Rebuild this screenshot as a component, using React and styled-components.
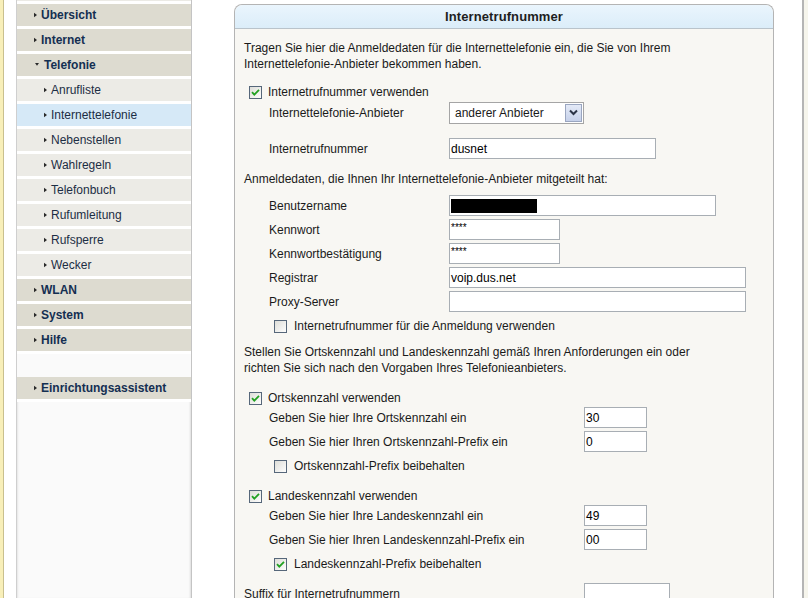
import React from "react";
import styled, { createGlobalStyle } from "styled-components";

const Global = createGlobalStyle`
  html, body { margin: 0; padding: 0; background: #ffffff; }
  body { font-family: "Liberation Sans", Arial, sans-serif; font-size: 12px; color: #1a1a1a; }
  #root { height: 100vh; overflow: hidden; }
`;

const Page = styled.div`
  display: flex;
  height: 598px;
  overflow: hidden;
  background: #fff;
`;

const EdgeLeft = styled.div`
  width: 3px;
  flex: none;
  background: #f8efb9;
  border-right: 1px solid #c9c08e;
`;

const Gutter = styled.div`
  width: ${(p) => p.$w}px;
  flex: none;
  background: #fff;
`;

const Sidebar = styled.nav`
  width: 174px;
  flex: none;
  background: #fafafa;
  border-left: 1px solid #cfcfcf;
  border-right: 1px solid #c4c4c4;
  box-shadow: inset 2px 0 2px -1px #e6e6e6, inset -2px 0 2px -1px #dedede;
  display: flex;
  flex-direction: column;
  & > * { flex: none; }
`;

const Stub = styled.div`
  height: 1px;
  background: #ebeae5;
  border-bottom: 3px solid #fff;
`;

const NavItem = styled.div`
  height: 22px;
  border-bottom: 3px solid #fff;
  display: flex;
  align-items: center;
  gap: 4px;
  padding-left: ${(p) => (p.$sub ? 27 : 17)}px;
  background: ${(p) => (p.$active ? "#d6e9f7" : p.$sub ? "#ecebe6" : "#dddbd0")};
  color: ${(p) => (p.$sub ? "#1c2d44" : "#142f52")};
  font-weight: ${(p) => (p.$sub ? "normal" : "bold")};
  font-size: 12px;
  white-space: nowrap;
`;

const NavSpacer = styled.div`
  height: 23px;
  background: #fafafa;
`;

const Arrow = styled.svg`
  flex: none;
  width: 5px;
  height: 6px;
`;

const Panel = styled.section`
  width: 538px;
  flex: none;
  margin-top: 4px;
  border: 1px solid #b4b4b4;
  border-bottom: none;
  border-radius: 8px 8px 0 0;
  background: #f8f7f3;
  display: flex;
  flex-direction: column;
  & > * { flex: none; }
`;

const PanelHead = styled.div`
  height: 23px;
  border-radius: 8px 8px 0 0;
  background: linear-gradient(#eaf5fd, #dbedf9);
  border-bottom: 1px solid #b9c3cb;
  display: flex;
  align-items: center;
  justify-content: center;
  font-weight: bold;
  font-size: 13px;
  color: #1e1e1e;
  letter-spacing: 0.1px;
`;

const PanelBody = styled.div`
  padding: 11px 9px 0 9px;
  display: flex;
  flex-direction: column;
  & > * { flex: none; }
`;

const Para = styled.p`
  margin: ${(p) => p.$mt || 0}px 0 0 0;
  line-height: 16px;
  font-size: 12px;
`;

const CheckRow = styled.label`
  display: flex;
  align-items: center;
  height: 16px;
  margin-top: ${(p) => p.$mt || 0}px;
  padding-left: ${(p) => (p.$sub ? 30 : 5)}px;
  gap: ${(p) => (p.$sub ? 7 : 6)}px;
  line-height: 16px;
`;

const FieldRow = styled.div`
  display: flex;
  align-items: center;
  height: 21px;
  margin-top: ${(p) => p.$mt || 0}px;
  padding-left: ${(p) => (p.$flush ? 0 : 25)}px;
`;

const Label = styled.span`
  width: ${(p) => p.$w || 180}px;
  flex: none;
`;

const TextBox = styled.div`
  width: ${(p) => p.$w}px;
  height: 21px;
  flex: none;
  box-sizing: border-box;
  border: 1px solid #a8aeb4;
  background: #fff;
  display: flex;
  align-items: ${(p) => (p.$top ? "flex-start" : "center")};
  padding: ${(p) => (p.$top ? "3px 1px 0" : "0 1px")};
  font-size: ${(p) => (p.$top ? "10px" : "12px")};
  line-height: ${(p) => (p.$top ? "10px" : "16px")};
  color: #000;
`;

const Redact = styled.div`
  width: 86px;
  height: 14px;
  background: #000;
`;

const SelectBox = styled.div`
  width: 135px;
  height: 22px;
  flex: none;
  box-sizing: border-box;
  border: 1px solid #a5a5a5;
  background: #fff;
  display: flex;
  align-items: center;
  padding: 0 1px 0 5px;
  font-size: 12px;
`;

const SelectText = styled.span`
  flex: 1;
  white-space: nowrap;
`;

const SelectButton = styled.span`
  width: 17px;
  height: 18px;
  box-sizing: border-box;
  border: 1px solid #9aa6c0;
  background: linear-gradient(#e4eaf7, #c6d1ea);
  display: flex;
  align-items: center;
  justify-content: center;
`;

const EdgeRight = styled.div`
  width: 6px;
  flex: none;
  border-left: 2px solid #b5b5b5;
  background: #f6f5ec;
`;

function Tri({ down }) {
  return down ? (
    <Arrow viewBox="0 0 6 6" style={{ width: 6, height: 4 }}>
      <path d="M0 0 L6 0 L3 4 Z" fill="#2a2a2a" />
    </Arrow>
  ) : (
    <Arrow viewBox="0 0 4 6" style={{ width: 3 }}>
      <path d="M0 0 L4 3 L0 6 Z" fill="#2a2a2a" />
    </Arrow>
  );
}

function Check({ on }) {
  return (
    <svg width="13" height="13" viewBox="0 0 13 13" style={{ flex: "none" }}>
      <defs>
        <linearGradient id="cbg" x1="0" y1="0" x2="1" y2="1">
          <stop offset="0" stopColor="#dcdcd6" />
          <stop offset="1" stopColor="#ffffff" />
        </linearGradient>
      </defs>
      <rect x="0.5" y="0.5" width="12" height="12" fill="url(#cbg)" stroke="#56677a" />
      {on && (
        <path
          d="M3 6.2 L5.3 8.6 L10 3.9"
          fill="none"
          stroke="#21a121"
          strokeWidth="1.8"
        />
      )}
    </svg>
  );
}

const nav = [
  { t: "Übersicht" },
  { t: "Internet" },
  { t: "Telefonie", open: true },
  { t: "Anrufliste", sub: true },
  { t: "Internettelefonie", sub: true, active: true },
  { t: "Nebenstellen", sub: true },
  { t: "Wahlregeln", sub: true },
  { t: "Telefonbuch", sub: true },
  { t: "Rufumleitung", sub: true },
  { t: "Rufsperre", sub: true },
  { t: "Wecker", sub: true },
  { t: "WLAN" },
  { t: "System" },
  { t: "Hilfe" },
];

export default function App() {
  return (
    <>
      <Global />
      <Page>
        <EdgeLeft />
        <Gutter $w={12} />
        <Sidebar>
          <Stub />
          {nav.map((n) => (
            <NavItem key={n.t} $sub={n.sub} $active={n.active}>
              <Tri down={n.open} />
              {n.t}
            </NavItem>
          ))}
          <NavSpacer />
          <NavItem>
            <Tri />
            Einrichtungsassistent
          </NavItem>
        </Sidebar>
        <Gutter $w={42} />
        <Panel>
          <PanelHead>Internetrufnummer</PanelHead>
          <PanelBody>
            <Para>
              Tragen Sie hier die Anmeldedaten für die Internettelefonie ein, die Sie von Ihrem
              <br />
              Internettelefonie-Anbieter bekommen haben.
            </Para>
            <CheckRow $mt={12}>
              <Check on />
              Internetrufnummer verwenden
            </CheckRow>
            <FieldRow $mt={2}>
              <Label>Internettelefonie-Anbieter</Label>
              <SelectBox>
                <SelectText>anderer Anbieter</SelectText>
                <SelectButton>
                  <svg width="9" height="7" viewBox="0 0 9 7">
                    <path d="M1 1.5 L4.5 5 L8 1.5" fill="none" stroke="#2b3447" strokeWidth="2" />
                  </svg>
                </SelectButton>
              </SelectBox>
            </FieldRow>
            <FieldRow $mt={15}>
              <Label>Internetrufnummer</Label>
              <TextBox $w={207}>dusnet</TextBox>
            </FieldRow>
            <Para $mt={12}>Anmeldedaten, die Ihnen Ihr Internettelefonie-Anbieter mitgeteilt hat:</Para>
            <FieldRow $mt={8}>
              <Label>Benutzername</Label>
              <TextBox $w={267}>
                <Redact />
              </TextBox>
            </FieldRow>
            <FieldRow $mt={3}>
              <Label>Kennwort</Label>
              <TextBox $w={111} $top>****</TextBox>
            </FieldRow>
            <FieldRow $mt={3}>
              <Label>Kennwortbestätigung</Label>
              <TextBox $w={111} $top>****</TextBox>
            </FieldRow>
            <FieldRow $mt={3}>
              <Label>Registrar</Label>
              <TextBox $w={297}>voip.dus.net</TextBox>
            </FieldRow>
            <FieldRow $mt={3}>
              <Label>Proxy-Server</Label>
              <TextBox $w={297} />
            </FieldRow>
            <CheckRow $sub $mt={6}>
              <Check />
              Internetrufnummer für die Anmeldung verwenden
            </CheckRow>
            <Para $mt={10}>
              Stellen Sie Ortskennzahl und Landeskennzahl gemäß Ihren Anforderungen ein oder
              <br />
              richten Sie sich nach den Vorgaben Ihres Telefonieanbieters.
            </Para>
            <CheckRow $mt={14}>
              <Check on />
              Ortskennzahl verwenden
            </CheckRow>
            <FieldRow $mt={1}>
              <Label $w={315}>Geben Sie hier Ihre Ortskennzahl ein</Label>
              <TextBox $w={63}>30</TextBox>
            </FieldRow>
            <FieldRow $mt={3}>
              <Label $w={315}>Geben Sie hier Ihren Ortskennzahl-Prefix ein</Label>
              <TextBox $w={63}>0</TextBox>
            </FieldRow>
            <CheckRow $sub $mt={6}>
              <Check />
              Ortskennzahl-Prefix beibehalten
            </CheckRow>
            <CheckRow $mt={14}>
              <Check on />
              Landeskennzahl verwenden
            </CheckRow>
            <FieldRow $mt={1}>
              <Label $w={315}>Geben Sie hier Ihre Landeskennzahl ein</Label>
              <TextBox $w={63}>49</TextBox>
            </FieldRow>
            <FieldRow $mt={3}>
              <Label $w={315}>Geben Sie hier Ihren Landeskennzahl-Prefix ein</Label>
              <TextBox $w={63}>00</TextBox>
            </FieldRow>
            <CheckRow $sub $mt={6}>
              <Check on />
              Landeskennzahl-Prefix beibehalten
            </CheckRow>
            <FieldRow $mt={11} $flush>
              <Label $w={340}>Suffix für Internetrufnummern</Label>
              <TextBox $w={86} />
            </FieldRow>
          </PanelBody>
        </Panel>
        <Gutter $w={28} />
        <EdgeRight />
      </Page>
    </>
  );
}
